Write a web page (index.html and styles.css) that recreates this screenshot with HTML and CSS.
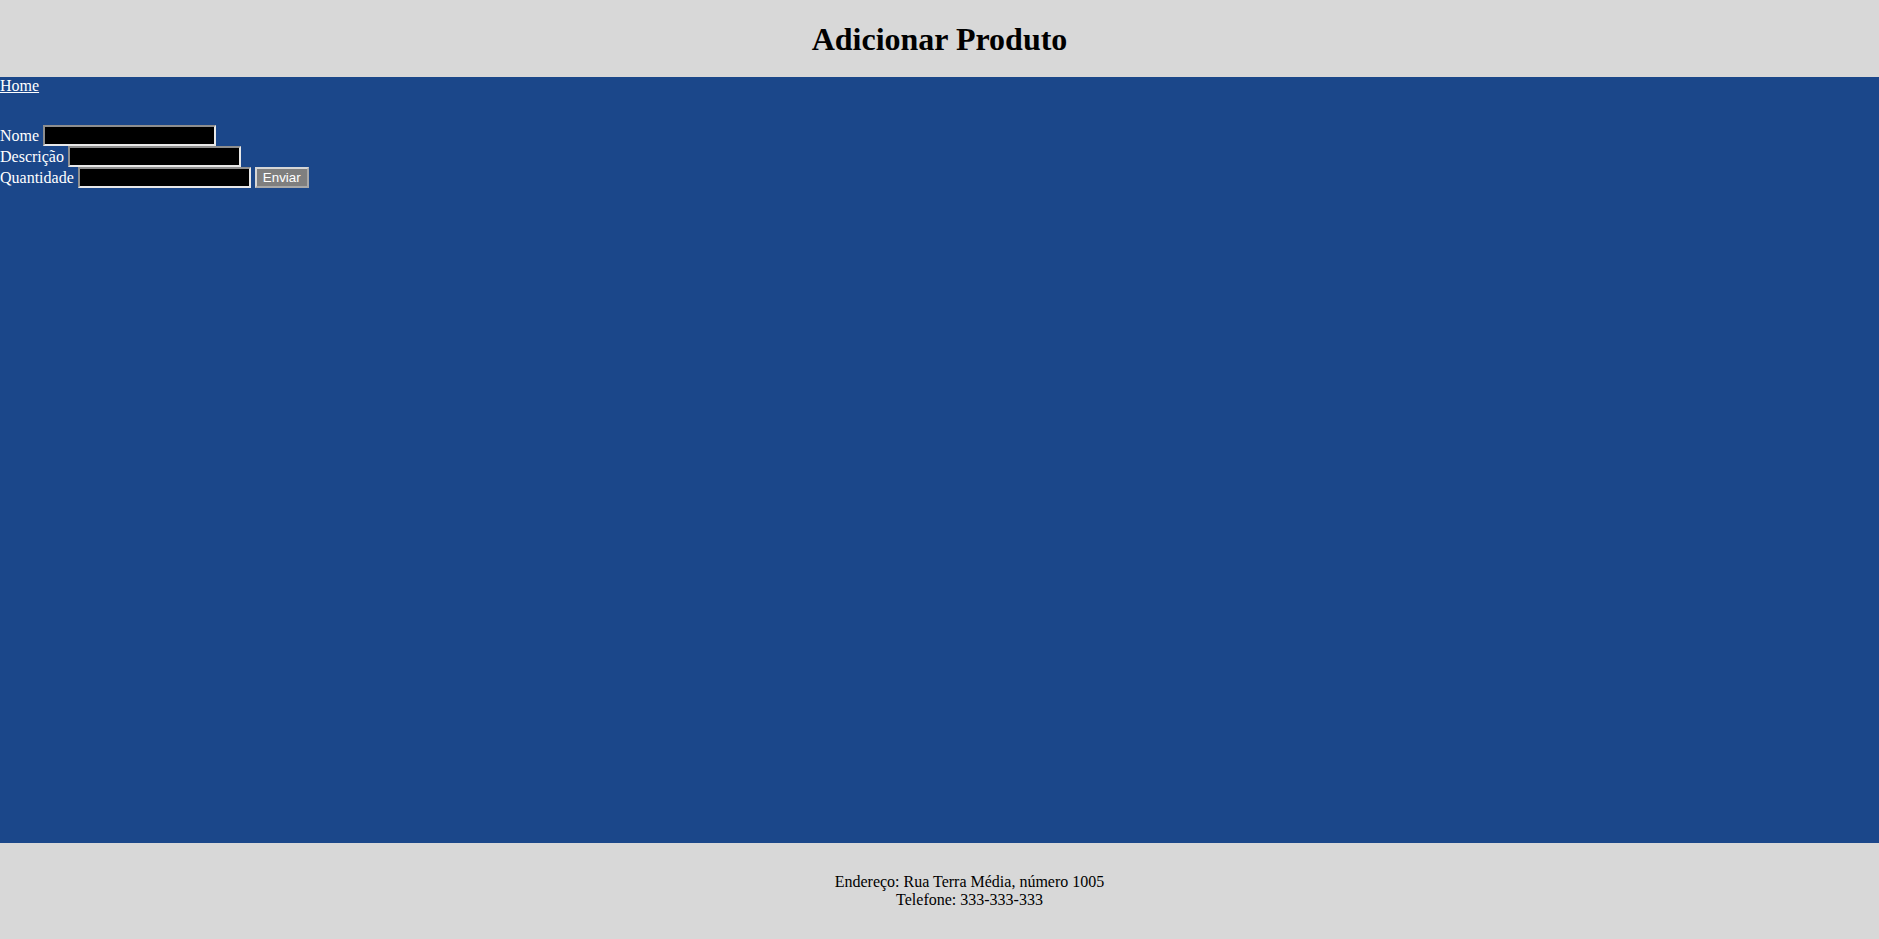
FILE: index.html
```html
<!DOCTYPE html>
<html lang="pt-BR">
<head>
<meta charset="utf-8">
<title>Adicionar Produto</title>
<link rel="stylesheet" href="styles.css">
</head>
<body>
<header class="site-header">
  <h1 class="title">Adicionar Produto</h1>
</header>
<main class="content">
  <nav class="nav"><a class="nav-link" href="#">Home</a></nav>
  <form class="product-form">
    <div class="row"><label>Nome</label> <input class="field" type="text"></div>
    <div class="row"><label>Descrição</label> <input class="field" type="text"></div>
    <div class="row"><label>Quantidade</label> <input class="field" type="text"> <button class="submit" type="submit">Enviar</button></div>
  </form>
</main>
<footer class="site-footer">
  <p class="footer-text">Endereço: Rua Terra Média, número 1005<br>Telefone: 333-333-333</p>
</footer>
</body>
</html>
```
FILE: styles.css
```css
html, body {
  margin: 0;
  padding: 0;
}
body {
  font-family: "Liberation Serif", "Times New Roman", serif;
  font-size: 16px;
  display: flex;
  flex-direction: column;
  height: 939px;
}
.site-header {
  background: #d8d8d8;
  height: 77px;
  box-sizing: border-box;
  padding-top: 21px;
}
.title {
  margin: 0;
  text-align: center;
  font-size: 32px;
  font-weight: bold;
  color: #000;
}
.content {
  flex: 1;
  background: #1b478a;
  color: #fff;
}
.nav-link {
  color: #fff;
}
.product-form {
  margin: 0;
  padding-top: 30px;
}
.row {
  height: 21px;
  line-height: 18px;
}
.field {
  font-family: "Liberation Sans", Arial, sans-serif;
  font-size: 13.333px;
  background: #000;
  color: #fff;
  width: 173px;
  height: 21px;
  box-sizing: border-box;
  padding: 1px 2px;
  margin: 0;
  border-style: solid;
  border-width: 2px;
  border-color: #8e8e8e #e8e8e8 #e8e8e8 #8e8e8e;
  vertical-align: top;
}
.row label {
  vertical-align: top;
  line-height: 21px;
}
.submit {
  font-family: "Liberation Sans", Arial, sans-serif;
  font-size: 13.333px;
  background: #7f7f7f;
  color: #fff;
  height: 21px;
  width: 54px;
  box-sizing: border-box;
  padding: 1px 6px;
  margin: 0;
  border-style: solid;
  border-width: 2px;
  border-color: #d6d6d6 #a8a8a8 #a8a8a8 #d6d6d6;
  vertical-align: top;
  line-height: 15px;
}
.site-footer {
  background: #d8d8d8;
  height: 96px;
  box-sizing: border-box;
  padding: 30px 0 0 60px;
}
.footer-text {
  margin: 0;
  text-align: center;
  color: #000;
}
```
